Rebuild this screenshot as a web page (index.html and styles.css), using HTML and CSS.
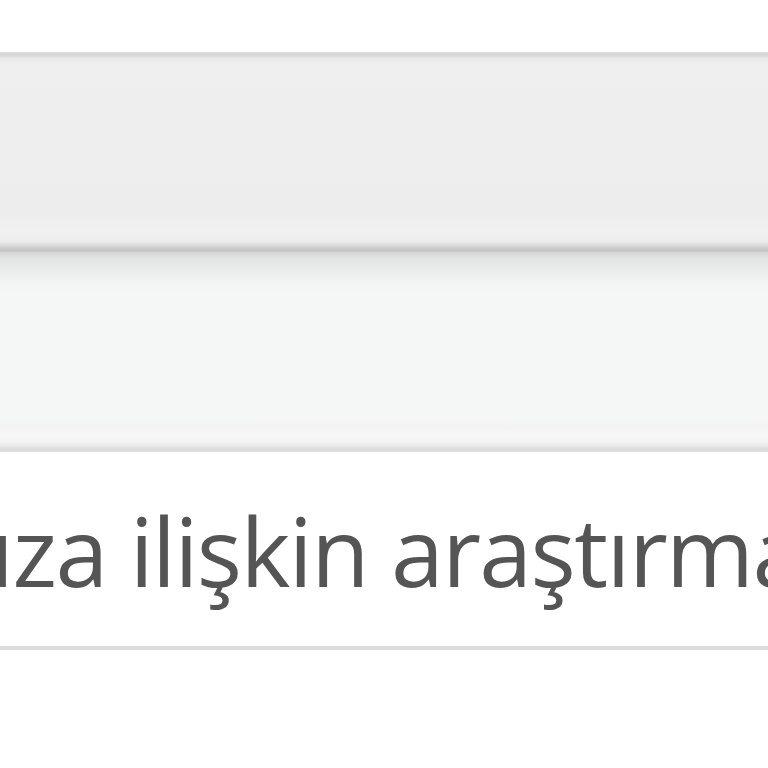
FILE: index.html
```html
<!DOCTYPE html>
<html lang="tr">
<head>
<meta charset="utf-8">
<title>Araştırma</title>
<link rel="stylesheet" href="styles.css">
</head>
<body>
<div class="page">
  <div class="spacer"></div>
  <div class="bar bar-top"></div>
  <div class="bar bar-sub"></div>
  <div class="row">
    <span class="row-text">konunuza ilişkin araştırmalar</span>
  </div>
</div>
</body>
</html>
```
FILE: styles.css
```css
html, body {
  margin: 0;
  padding: 0;
  background: #ffffff;
}
.page {
  width: 768px;
  height: 768px;
  overflow: hidden;
  display: flex;
  flex-direction: column;
}
.spacer {
  height: 52px;
  flex: none;
}
.bar {
  flex: none;
}
.bar-top {
  height: 200px;
  background: linear-gradient(to bottom,
    #dcdcdc 0px, #d6d6d6 3px, #e8e8e8 6px, #efefef 12px,
    #eeeeee 40px, #ededed 160px, #efefef 172px, #f1f1f1 180px,
    #eeeeee 186px, #eaeaea 190px, #d2d2d2 195px, #c6c6c6 198px, #c9c9c9 200px);
}
.bar-sub {
  height: 200px;
  background: linear-gradient(to bottom,
    #d4d4d4 0px, #e2e3e3 6px, #e9eaea 16px, #f2f3f3 30px,
    #f5f6f6 40px, #f5f6f6 168px, #f3f3f3 174px, #f8f8f8 182px,
    #f4f4f4 190px, #e8e8e8 194px, #dcdcdc 197px, #dedede 200px);
}
.row {
  flex: none;
  height: 194px;
  border-bottom: 4px solid #dddddd;
  white-space: nowrap;
  overflow: hidden;
  display: flex;
  align-items: center;
}
.row-text {
  font-family: "Open Sans", "DejaVu Sans", sans-serif;
  font-size: 95px;
  letter-spacing: -1.6px;
  color: #555555;
  line-height: 1;
  margin-left: -318px;
  padding-top: 2px;
}
```
